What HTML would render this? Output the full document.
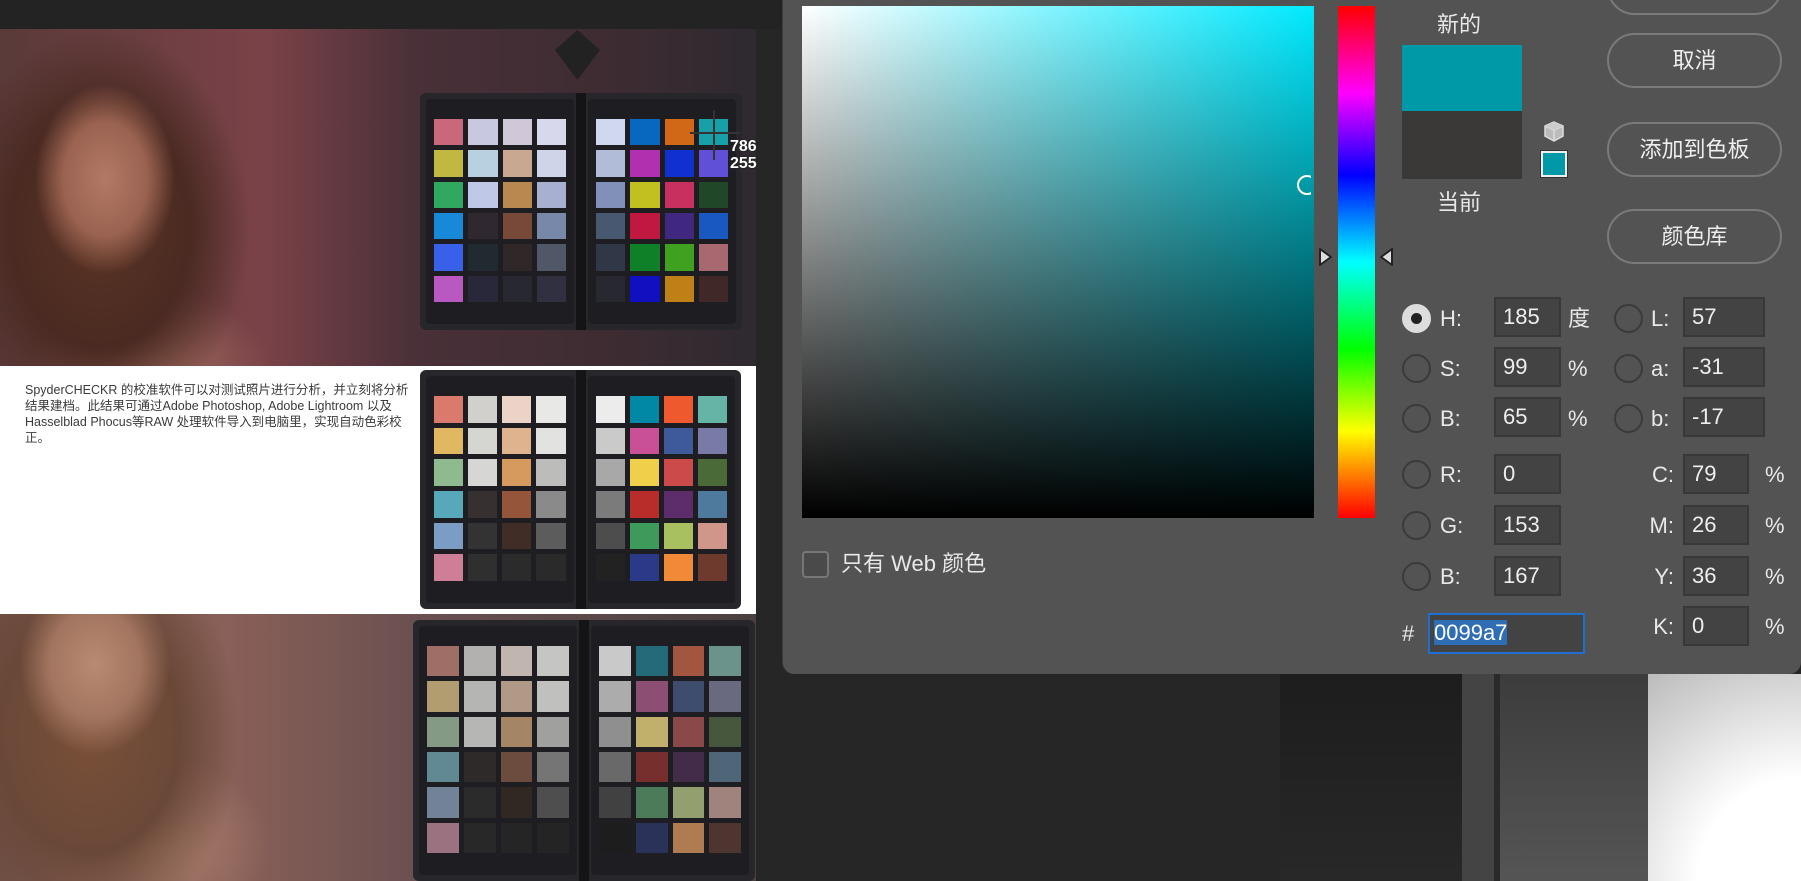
<!DOCTYPE html>
<html><head><meta charset="utf-8">
<style>
*{margin:0;padding:0;box-sizing:border-box}
html,body{width:1801px;height:881px;overflow:hidden}
body{background:#262626;position:relative;font-family:"Liberation Sans","Noto Sans CJK SC",sans-serif}
.a{position:absolute}
.photo1{left:0;top:29px;width:756px;height:337px;background:
radial-gradient(ellipse 70px 95px at 105px 150px,#b27a66 0%,#9a6250 60%,transparent 100%),
radial-gradient(ellipse 150px 200px at 100px 200px,#5a3424 0%,#4a2a22 60%,transparent 100%),
radial-gradient(ellipse 120px 80px at 150px 340px,#a87060 0%,transparent 100%),
linear-gradient(90deg,#5a3a3a 0%,#7a4248 35%,#4a3038 55%,#3e2c32 80%,#2e2a30 100%)}
.white{left:0;top:366px;width:756px;height:248px;background:#fff}
.photo2{left:0;top:614px;width:756px;height:267px;background:
radial-gradient(ellipse 75px 90px at 95px 50px,#b88a72 0%,#a27560 60%,transparent 100%),
radial-gradient(ellipse 150px 200px at 90px 120px,#7a5038 0%,#6a4838 60%,transparent 100%),
radial-gradient(ellipse 120px 90px at 150px 230px,#b08470 0%,transparent 100%),
linear-gradient(90deg,#705048 0%,#8a6058 30%,#6a5050 55%,#5a4848 80%,#4a4040 100%)}
.chart{background:#27272b;border-radius:6px}
.panel{position:absolute;top:6px;bottom:6px;background:#1e1e22;border-radius:4px}
.grid{position:absolute;display:grid;grid-template-columns:repeat(4,1fr);gap:5px}
.dlg{left:782px;top:0;width:1019px;height:674px;background:#535353;border-bottom-left-radius:12px;border-bottom-right-radius:12px;border-left:1px solid #3c3c3c}
.t{position:absolute;color:#e8e8e8;font-size:22px;line-height:26px;white-space:nowrap}
.btn{position:absolute;left:1607px;width:175px;height:55px;border:2px solid #7a7a7a;border-radius:28px;color:#eee;font-size:22px;text-align:center;line-height:51px}
.rad{position:absolute;width:29px;height:29px;border-radius:50%;border:2px solid #3a3a3a;left:1402px}
.rad2{left:1614px}
.in{position:absolute;height:40px;background:#434343;border:2px solid #383838;color:#eee;font-size:22px;line-height:36px;padding-left:7px}
</style></head><body>
<div class="a" style="left:0;top:0;width:782px;height:29px;background:#232323"></div>
<div class="a photo1"></div>
<div class="a white"></div>
<div class="a photo2"></div>
<div class="a" style="left:25px;top:382px;font-size:12.5px;line-height:16px;color:#3a3a3a;white-space:nowrap">SpyderCHECKR 的校准软件可以对测试照片进行分析，并立刻将分析<br>结果建档。此结果可通过Adobe Photoshop, Adobe Lightroom 以及<br>Hasselblad Phocus等RAW 处理软件导入到电脑里，实现自动色彩校<br>正。</div>
<div class="a" style="left:555px;top:30px;width:45px;height:50px;background:#222;clip-path:polygon(50% 0,100% 40%,50% 100%,0 40%)"></div>
<div id="c1" class="a chart" style="left:420px;top:93px;width:322px;height:237px"></div>
<div id="c2" class="a chart" style="left:420px;top:370px;width:321px;height:239px"></div>
<div id="c3" class="a chart" style="left:413px;top:620px;width:342px;height:261px"></div>
<div class="a" style="left:713px;top:110px;width:2px;height:50px;background:#333"></div>
<div class="a" style="left:690px;top:132px;width:50px;height:2px;background:#333"></div>
<div class="a" style="left:730px;top:138px;color:#fff;font-size:16px;line-height:17px;font-weight:bold;text-shadow:1px 1px 0 #222,-1px -1px 0 #222">786<br>255</div>
<div class="a" style="left:1462px;top:674px;width:32px;height:207px;background:#444"></div>
<div class="a" style="left:1494px;top:674px;width:6px;height:207px;background:#2a2a2a"></div>
<div class="a" style="left:1500px;top:674px;width:148px;height:207px;background:linear-gradient(#3c3c3c,#555)"></div>
<div class="a" style="left:1648px;top:674px;width:153px;height:207px;background:radial-gradient(circle at 100% 100%,#fff 40%,#bbb 100%)"></div>
<div class="a" style="left:1280px;top:674px;width:182px;height:207px;background:linear-gradient(#1d1d1d,#282828)"></div>
<div class="a dlg"></div>
<div class="a" style="left:802px;top:6px;width:512px;height:512px;background:linear-gradient(to top,#000,rgba(0,0,0,0)),linear-gradient(to right,#fff,#00eaff)"></div>
<div class="a" style="left:1297px;top:175px;width:20px;height:20px;border:2px solid #fff;border-radius:50%;clip-path:inset(0 6px 0 0)"></div>
<div class="a" style="left:1338px;top:6px;width:37px;height:512px;background:linear-gradient(#f00 0%,#f0f 17%,#00f 33%,#0ff 50%,#0f0 67%,#ff0 83%,#f00 100%)"></div>
<svg class="a" style="left:1318px;top:246px" width="16" height="22"><path d="M2 3 L13 11 L2 19 Z" fill="#ddd" stroke="#222" stroke-width="2" stroke-linejoin="round"/></svg>
<svg class="a" style="left:1378px;top:246px" width="16" height="22"><path d="M14 3 L3 11 L14 19 Z" fill="#ddd" stroke="#222" stroke-width="2" stroke-linejoin="round"/></svg>
<div class="a" style="left:802px;top:551px;width:27px;height:27px;border:2px solid #777;border-radius:4px;background:#4a4a4a"></div>
<div class="t" style="left:841px;top:551px">只有 Web 颜色</div>
<div class="t" style="left:1437px;top:12px">新的</div>
<div class="a" style="left:1402px;top:45px;width:120px;height:66px;background:#0099a7"></div>
<div class="a" style="left:1402px;top:111px;width:120px;height:68px;background:#3a3938"></div>
<div class="t" style="left:1437px;top:190px">当前</div>
<svg class="a" style="left:1542px;top:119px" width="24" height="26"><path d="M12 3 L21 7 L21 17 L12 22 L3 17 L3 7 Z M3 7 L12 11 L21 7 M12 11 L12 22" fill="#bbb" stroke="#ddd" stroke-width="1.5"/><path d="M3 7 L12 3 L21 7 L12 11Z" fill="#ccc"/></svg>
<div class="a" style="left:1541px;top:151px;width:26px;height:26px;border:2px solid #eee;background:#0099a7;box-shadow:0 0 0 1px #333"></div>
<div class="btn" style="top:-40px"></div>
<div class="btn" style="top:33px">取消</div>
<div class="btn" style="top:122px">添加到色板</div>
<div class="btn" style="top:209px">颜色库</div>

<div class="rad" style="top:304px;background:#ddd;border-color:#ddd"></div>
<div class="a" style="left:1411px;top:313px;width:11px;height:11px;border-radius:50%;background:#222"></div>
<div class="rad" style="top:354px"></div>
<div class="rad" style="top:404px"></div>
<div class="rad" style="top:460px"></div>
<div class="rad" style="top:511px"></div>
<div class="rad" style="top:562px"></div>
<div class="rad rad2" style="top:304px"></div>
<div class="rad rad2" style="top:354px"></div>
<div class="rad rad2" style="top:404px"></div>

<div class="t" style="left:1440px;top:306px">H:</div>
<div class="t" style="left:1440px;top:356px">S:</div>
<div class="t" style="left:1440px;top:406px">B:</div>
<div class="t" style="left:1440px;top:462px">R:</div>
<div class="t" style="left:1440px;top:513px">G:</div>
<div class="t" style="left:1440px;top:564px">B:</div>
<div class="in" style="left:1494px;top:297px;width:67px">185</div>
<div class="in" style="left:1494px;top:347px;width:67px">99</div>
<div class="in" style="left:1494px;top:397px;width:67px">65</div>
<div class="in" style="left:1494px;top:454px;width:67px">0</div>
<div class="in" style="left:1494px;top:505px;width:67px">153</div>
<div class="in" style="left:1494px;top:556px;width:67px">167</div>
<div class="t" style="left:1568px;top:306px">度</div>
<div class="t" style="left:1568px;top:356px">%</div>
<div class="t" style="left:1568px;top:406px">%</div>

<div class="t" style="left:1651px;top:306px">L:</div>
<div class="t" style="left:1651px;top:356px">a:</div>
<div class="t" style="left:1651px;top:406px">b:</div>
<div class="in" style="left:1683px;top:297px;width:82px">57</div>
<div class="in" style="left:1683px;top:347px;width:82px">-31</div>
<div class="in" style="left:1683px;top:397px;width:82px">-17</div>

<div class="t" style="left:1640px;top:462px;width:34px;text-align:right">C:</div>
<div class="t" style="left:1640px;top:513px;width:34px;text-align:right">M:</div>
<div class="t" style="left:1640px;top:564px;width:34px;text-align:right">Y:</div>
<div class="t" style="left:1640px;top:614px;width:34px;text-align:right">K:</div>
<div class="in" style="left:1683px;top:454px;width:66px">79</div>
<div class="in" style="left:1683px;top:505px;width:66px">26</div>
<div class="in" style="left:1683px;top:556px;width:66px">36</div>
<div class="in" style="left:1683px;top:606px;width:66px">0</div>
<div class="t" style="left:1765px;top:462px">%</div>
<div class="t" style="left:1765px;top:513px">%</div>
<div class="t" style="left:1765px;top:564px">%</div>
<div class="t" style="left:1765px;top:614px">%</div>

<div class="t" style="left:1402px;top:621px">#</div>
<div class="in" style="left:1428px;top:613px;width:157px;height:41px;border-color:#1f6fd0;padding-left:4px"><span style="background:#2f6db5;color:#fff">0099a7</span></div>

<script>
var C1=[["#c8687a","#c8c8e0","#d0c8d8","#d8d8ec","#c0b840","#b8d0e0","#c8a890","#d0d4e8","#30a860","#c0c8e8","#b88850","#a8b0d0","#1888d8","#302830","#784838","#7888a8","#3860e8","#202a30","#302828","#505868","#b858c0","#28283a","#282830","#303040"],
["#d0d8f0","#0868c0","#d06818","#18a0a8","#b0bcd8","#b030b0","#1030d0","#6050d8","#8090b8","#c0c020","#c83060","#204828","#485870","#c01840","#402880","#1858c0","#303848","#108028","#40a020","#a86870","#282830","#1010c0","#c08018","#402828"]];
var C2=[["#d97a6c","#d2d0cc","#ebd3c7","#e8e8e6","#e0b862","#d5d5d2","#deb38d","#e2e2e0","#8fba8f","#d6d6d4","#d69a5e","#bcbcbb","#58a8bb","#363130","#94553a","#8a8a8a","#7b9cc4","#333333","#402d25","#5c5c5c","#cf7e98","#2f2f2f","#2b2b2b","#2a2a2a"],
["#ececec","#0088a5","#ee5a2e","#66b4a6","#cacaca","#c94f96","#3e5a9a","#7a7aa8","#a8a8a8","#f0d04a","#cc4a4a","#4a6a38","#7b7b7b","#b82c2a","#5c2d6a","#4e7a9e","#4d4d4d","#3e9a5a","#a8c060","#d0968a","#222222","#2a3a88","#f08a36","#6e3a2e"]];
function build(id,cols,filt){var el=document.getElementById(id);var W=el.offsetWidth,H=el.offsetHeight;var pw=(W-26)/2;
for(var p=0;p<2;p++){var pan=document.createElement('div');pan.className='panel';pan.style.left=(p?W/2+7:6)+'px';pan.style.width=pw+'px';el.appendChild(pan);
var g=document.createElement('div');g.className='grid';g.style.left='8px';g.style.right='8px';g.style.top='20px';g.style.bottom='22px';g.style.gridTemplateRows='repeat(6,1fr)';
cols[p].forEach(function(c){var d=document.createElement('div');d.style.background=c;g.appendChild(d)});if(filt)g.style.filter=filt;pan.appendChild(g);}
var sp=document.createElement('div');sp.style.cssText='position:absolute;left:'+(W/2-5)+'px;top:0;width:10px;height:100%;background:#141416';el.appendChild(sp);}
build('c1',C1);build('c2',C2);build('c3',C2,'saturate(0.6) brightness(0.85)');
</script>
</body></html>
